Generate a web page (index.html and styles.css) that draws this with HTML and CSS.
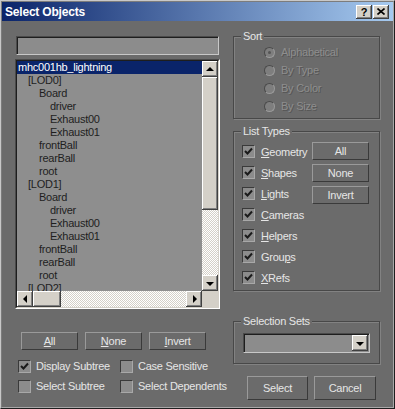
FILE: index.html
```html
<!DOCTYPE html>
<html lang="en">
<head>
  <meta charset="UTF-8">
  <title>Select Objects</title>
  <link rel="stylesheet" href="styles.css">
</head>
<body>
  <div class="window">
    <div class="frame">
      <div class="titlebar">
        <span class="title">Select Objects</span>
        <div class="caption-btns">
          <span class="cap-btn">?</span>
          <span class="cap-btn">
            <svg width="8" height="7" viewBox="0 0 8 7"><path d="M0.5 0.5 L7.5 6.5 M7.5 0.5 L0.5 6.5" stroke="#000" stroke-width="1.6"/></svg>
          </span>
        </div>
      </div>

      <div class="content">
        <div class="left">
          <div class="filter"></div>

          <div class="listbox">
            <div class="listbox-inner">
              <div class="list-main">
                <div class="rows">
                  <div class="row sel">mhc001hb_lightning</div>
                  <div class="row l1">[LOD0]</div>
                  <div class="row l2">Board</div>
                  <div class="row l3">driver</div>
                  <div class="row l3">Exhaust00</div>
                  <div class="row l3">Exhaust01</div>
                  <div class="row l2">frontBall</div>
                  <div class="row l2">rearBall</div>
                  <div class="row l2">root</div>
                  <div class="row l1">[LOD1]</div>
                  <div class="row l2">Board</div>
                  <div class="row l3">driver</div>
                  <div class="row l3">Exhaust00</div>
                  <div class="row l3">Exhaust01</div>
                  <div class="row l2">frontBall</div>
                  <div class="row l2">rearBall</div>
                  <div class="row l2">root</div>
                  <div class="row l1">[LOD2]</div>
                </div>
                <div class="vscroll">
                  <div class="sb-btn"><span class="arrow up"></span></div>
                  <div class="track vtrack"><div class="thumb vthumb"></div></div>
                  <div class="sb-btn"><span class="arrow down"></span></div>
                </div>
              </div>
              <div class="hscroll">
                <div class="sb-btn"><span class="arrow left"></span></div>
                <div class="track htrack"><div class="thumb hthumb"></div></div>
                <div class="sb-btn"><span class="arrow right"></span></div>
                <div class="corner"></div>
              </div>
            </div>
          </div>

          <div class="btn-row">
            <button class="btn"><u>A</u>ll</button>
            <button class="btn"><u>N</u>one</button>
            <button class="btn"><u>I</u>nvert</button>
          </div>

          <div class="opts">
            <label class="check"><span class="box on"></span>Display Subtree</label>
            <label class="check"><span class="box"></span>Case Sensitive</label>
            <label class="check"><span class="box"></span>Select Subtree</label>
            <label class="check"><span class="box"></span>Select Dependents</label>
          </div>
        </div>

        <div class="right">
          <div class="group sort">
            <span class="group-label">Sort</span>
            <div class="radio"><span class="dot checked"></span>Alphabetical</div>
            <div class="radio"><span class="dot"></span>By Type</div>
            <div class="radio"><span class="dot"></span>By Color</div>
            <div class="radio"><span class="dot"></span>By Size</div>
          </div>

          <div class="group types">
            <span class="group-label">List Types</span>
            <div class="type-checks">
              <label class="check"><span class="box on"></span><span><u>G</u>eometry</span></label>
              <label class="check"><span class="box on"></span><span><u>S</u>hapes</span></label>
              <label class="check"><span class="box on"></span><span><u>L</u>ights</span></label>
              <label class="check"><span class="box on"></span><span><u>C</u>ameras</span></label>
              <label class="check"><span class="box on"></span><span><u>H</u>elpers</span></label>
              <label class="check"><span class="box on"></span><span>Grou<u>p</u>s</span></label>
              <label class="check"><span class="box on"></span><span><u>X</u>Refs</span></label>
            </div>
            <div class="type-btns">
              <button class="btn">All</button>
              <button class="btn">None</button>
              <button class="btn">Invert</button>
            </div>
          </div>

          <div class="group sets">
            <span class="group-label">Selection Sets</span>
            <div class="combo">
              <div class="sb-btn"><span class="arrow down"></span></div>
            </div>
          </div>

          <div class="actions">
            <button class="btn select">Select</button>
            <button class="btn cancel">Cancel</button>
          </div>
        </div>
      </div>
    </div>
  </div>
</body>
</html>
```

FILE: styles.css
```css
:root {
  --bg: #6b6b6b;
  --field: #8c8c8c;
  --face: #d4d0c8;
  --text: #e6e6e6;
  --dim: #8e8e8e;
  --select: #0a246a;
}

* {
  box-sizing: border-box;
  margin: 0;
  padding: 0;
}

body {
  background: var(--bg);
  font-family: "Liberation Sans", Arial, sans-serif;
  font-size: 11px;
  letter-spacing: -0.25px;
  color: var(--text);
}

.window {
  width: 395px;
  height: 409px;
  border: 1px solid;
  border-color: #c8c8c8 #1e1e1e #1e1e1e #c8c8c8;
  background: var(--bg);
}

.frame {
  height: 100%;
  border: 1px solid;
  border-color: #7c7c7c #a8a8a8 #a8a8a8 #7c7c7c;
}

/* title bar */
.titlebar {
  height: 19px;
  display: flex;
  align-items: center;
  justify-content: space-between;
  padding: 0 4px 0 3px;
  background: linear-gradient(to right, #0a246a, #a6caf0);
}

.title {
  color: #fff;
  font-weight: bold;
  font-size: 12px;
  letter-spacing: -0.2px;
}

.caption-btns {
  display: flex;
  gap: 1px;
}

.cap-btn {
  width: 16px;
  height: 14px;
  display: flex;
  align-items: center;
  justify-content: center;
  background: var(--face);
  box-shadow: inset -1px -1px #404040, inset 1px 1px #fff, inset -2px -2px #808080;
  color: #000;
  font-weight: bold;
  font-size: 11px;
  letter-spacing: 0;
}

.content {
  display: grid;
  grid-template-columns: 205px 147px;
  column-gap: 13px;
  padding: 15px 0 0 13px;
}

/* left side */
.filter {
  height: 19px;
  margin: 0 1px;
  background: var(--field);
  border: 1px solid;
  border-color: #4a4a4a #c8c8c8 #c8c8c8 #4a4a4a;
  box-shadow: inset 1px 1px #1e1e1e;
}

.listbox {
  margin-top: 4px;
  height: 250px;
  border: 1px solid;
  border-color: #4a4a4a #fff #fff #4a4a4a;
}

.listbox-inner {
  height: 100%;
  border: 1px solid;
  border-color: #1e1e1e var(--face) var(--face) #1e1e1e;
  display: flex;
  flex-direction: column;
}

.list-main {
  display: flex;
  height: 230px;
}

.rows {
  flex: 1;
  overflow: hidden;
  background: #8e8e8e;
  color: #1e1e1e;
}

.row {
  height: 13px;
  line-height: 13px;
  padding-left: 1px;
  white-space: nowrap;
}

.row.l1 { padding-left: 11px; }
.row.l2 { padding-left: 22px; }
.row.l3 { padding-left: 33px; }

.row.sel {
  background: var(--select);
  color: #fff;
}

.vscroll {
  width: 16px;
  display: flex;
  flex-direction: column;
}

.hscroll {
  height: 16px;
  display: flex;
}

.sb-btn, .thumb, .corner {
  width: 16px;
  height: 16px;
  flex: none;
  background: var(--face);
}

.sb-btn, .thumb {
  display: flex;
  align-items: center;
  justify-content: center;
  box-shadow: inset -1px -1px #404040, inset 1px 1px #fff, inset -2px -2px #808080;
}

.track {
  flex: 1;
  background-image: repeating-conic-gradient(#fff 0 25%, var(--face) 0 50%);
  background-size: 2px 2px;
}

.vthumb { height: 133px; }
.hthumb { width: 28px; }

.arrow {
  width: 0;
  height: 0;
  border: 4px solid transparent;
}

.arrow.up { border-bottom-color: #000; border-top-width: 0; margin-top: -1px; }
.arrow.down { border-top-color: #000; border-bottom-width: 0; margin-top: 1px; }
.arrow.left { border-right-color: #000; border-left-width: 0; margin-left: -1px; }
.arrow.right { border-left-color: #000; border-right-width: 0; margin-left: 1px; }

.btn {
  width: 57px;
  height: 18px;
  background: var(--bg);
  border: 1px solid;
  border-color: #9a9a9a #3a3a3a #3a3a3a #9a9a9a;
  font-family: inherit;
  font-size: 11px;
  letter-spacing: -0.25px;
  color: var(--text);
}

.btn-row {
  display: flex;
  gap: 7px;
  margin-top: 23px;
  padding-left: 6px;
}

.opts {
  display: grid;
  grid-template-columns: 102px auto;
  grid-auto-rows: 20px;
  margin-top: 6px;
  padding-left: 3px;
}

.check {
  display: flex;
  align-items: center;
  gap: 5px;
  white-space: nowrap;
}

.box {
  width: 13px;
  height: 13px;
  flex: none;
  background: var(--field);
  border: 1px solid;
  border-color: #3a3a3a #a8a8a8 #a8a8a8 #3a3a3a;
}

.box.on {
  background: var(--field) url("data:image/svg+xml,%3Csvg xmlns='http://www.w3.org/2000/svg' width='11' height='11'%3E%3Cpath d='M2 5 L4.5 7.5 L9 2.5' fill='none' stroke='%231a1a1a' stroke-width='2'/%3E%3C/svg%3E") no-repeat center;
}

/* right side */
.group {
  position: relative;
  border: 1px solid #484848;
  box-shadow: inset 1px 1px #828282, 1px 1px #828282;
}

.group-label {
  position: absolute;
  top: -7px;
  left: 7px;
  padding: 0 2px;
  line-height: 13px;
  background: var(--bg);
}

.sort {
  height: 83px;
  padding: 6px 0 0 30px;
}

.radio {
  display: flex;
  align-items: center;
  gap: 6px;
  height: 18px;
  color: var(--dim);
  text-shadow: 1px 1px 0 rgba(70, 70, 70, 0.6);
}

.dot {
  width: 11px;
  height: 11px;
  border-radius: 50%;
  background: #7e7e7e;
  border: 1px solid;
  border-color: #4a4a4a #9a9a9a #9a9a9a #4a4a4a;
  display: flex;
  align-items: center;
  justify-content: center;
}

.dot.checked::after {
  content: "";
  width: 3px;
  height: 3px;
  border-radius: 50%;
  background: #555;
}

.types {
  margin-top: 12px;
  height: 160px;
  padding: 9px 0 0 8px;
  display: flex;
}

.type-checks {
  width: 70px;
  display: flex;
  flex-direction: column;
}

.type-checks .check {
  height: 21px;
  gap: 6px;
}

.type-btns {
  display: flex;
  flex-direction: column;
  gap: 4px;
  padding-top: 1px;
}

.sets {
  margin-top: 30px;
  height: 43px;
  padding: 11px 0 0 9px;
}

.combo {
  width: 127px;
  height: 20px;
  display: flex;
  justify-content: flex-end;
  background: var(--field);
  border: 1px solid;
  border-color: #4a4a4a #c8c8c8 #c8c8c8 #4a4a4a;
  box-shadow: inset 1px 1px #1e1e1e;
  padding: 1px 1px 0 0;
}

.actions {
  display: flex;
  gap: 6px;
  margin-top: 12px;
  padding-left: 14px;
}

.actions .btn {
  height: 24px;
  width: 61px;
}

.actions .cancel {
  width: 62px;
}
```
